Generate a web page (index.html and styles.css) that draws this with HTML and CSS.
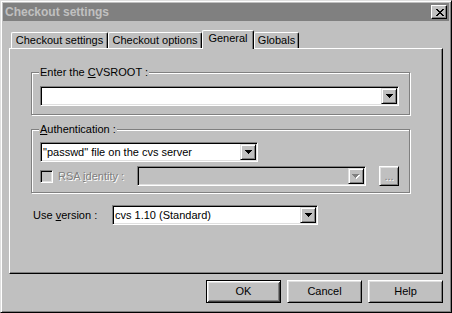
FILE: index.html
```html
<!DOCTYPE html>
<html>
<head>
<meta charset="utf-8">
<link rel="stylesheet" href="styles.css">
</head>
<body>
<div class="window">
  <div class="titlebar">
    <span class="title">Checkout settings</span>
    <span class="close"><svg width="8" height="7" viewBox="0 0 8 7" shape-rendering="crispEdges"><path fill="#000" d="M0 0h2v1H0z M6 0h2v1H6z M1 1h2v1H1z M5 1h2v1H5z M2 2h4v1H2z M3 3h2v1H3z M2 4h4v1H2z M1 5h2v1H1z M5 5h2v1H5z M0 6h2v1H0z M6 6h2v1H6z"/></svg></span>
  </div>
  <div class="body">
    <div class="tabs">
      <div class="tab t1">Checkout settings</div>
      <div class="tab t2">Checkout options</div>
      <div class="tab t3 active">General</div>
      <div class="tab t4">Globals</div>
    </div>
    <div class="panel">
      <div class="group g1">
        <div class="group-label">Enter the <u>C</u>VSROOT :</div>
        <div class="combo c-root">
          <span class="combo-text"></span>
          <span class="drop"><svg width="7" height="4" viewBox="0 0 7 4" shape-rendering="crispEdges"><path fill="#000" d="M0 0h7v1H0z M1 1h5v1H1z M2 2h3v1H2z M3 3h1v1H3z"/></svg></span>
        </div>
      </div>
      <div class="group g2">
        <div class="group-label"><u>A</u>uthentication :</div>
        <div class="combo c-auth">
          <span class="combo-text">"passwd" file on the cvs server</span>
          <span class="drop"><svg width="7" height="4" viewBox="0 0 7 4" shape-rendering="crispEdges"><path fill="#000" d="M0 0h7v1H0z M1 1h5v1H1z M2 2h3v1H2z M3 3h1v1H3z"/></svg></span>
        </div>
        <div class="rsa-row">
          <span class="check"></span>
          <span class="rsa-label">RSA <u>i</u>dentity :</span>
          <div class="combo combo-disabled c-rsa">
            <span class="combo-text"></span>
            <span class="drop"><svg width="8" height="5" viewBox="0 0 8 5" shape-rendering="crispEdges"><path fill="#fff" d="M1 1h7v1H1z M2 2h5v1H2z M3 3h3v1H3z M4 4h1v1H4z"/><path fill="#808080" d="M0 0h7v1H0z M1 1h5v1H1z M2 2h3v1H2z M3 3h1v1H3z"/></svg></span>
          </div>
          <span class="btn dots">...</span>
        </div>
      </div>
      <div class="version-row">
        <span class="version-label">Use <u>v</u>ersion :</span>
        <div class="combo c-ver">
          <span class="combo-text">cvs 1.10 (Standard)</span>
          <span class="drop"><svg width="7" height="4" viewBox="0 0 7 4" shape-rendering="crispEdges"><path fill="#000" d="M0 0h7v1H0z M1 1h5v1H1z M2 2h3v1H2z M3 3h1v1H3z"/></svg></span>
        </div>
      </div>
    </div>
    <div class="buttons">
      <span class="btn push default">OK</span>
      <span class="btn push">Cancel</span>
      <span class="btn push">Help</span>
    </div>
  </div>
</div>
</body>
</html>
```

FILE: styles.css
```css
* { box-sizing: border-box; }
html, body { margin: 0; padding: 0; background: #c0c0c0; }
body {
  font-family: "Liberation Sans", Arial, sans-serif;
  font-size: 11px;
  line-height: 13px;
  color: #000;
}
u { text-decoration: underline; text-underline-offset: 1px; }

.window {
  width: 452px;
  height: 313px;
  border: 1px solid;
  border-color: #dfdfdf #000 #000 #dfdfdf;
  box-shadow: inset 1px 1px #fff, inset -1px -1px #808080;
  padding: 2px;
  background: #c0c0c0;
}

.titlebar {
  height: 18px;
  background: #808080;
  display: flex;
  align-items: center;
  justify-content: space-between;
  padding: 0 2px;
}
.title {
  font-weight: bold;
  font-size: 12px;
  line-height: 14px;
  color: #c0c0c0;
}
.close {
  width: 16px;
  height: 14px;
  display: flex;
  align-items: center;
  justify-content: center;
  background: #c0c0c0;
  border: 1px solid;
  border-color: #fff #000 #000 #fff;
  box-shadow: inset -1px -1px #808080;
  padding-left: 1px;
}
.close svg { display: block; }

.body { padding: 9px 6px 0 6px; }

.tabs {
  display: flex;
  align-items: flex-end;
  height: 18px;
  padding-left: 2px;
}
.tab {
  height: 16px;
  padding-top: 1px;
  border-left: 1px solid #fff;
  border-top: 1px solid #fff;
  border-right: 1px solid #000;
  box-shadow: inset -1px 0 #808080;
  border-radius: 2px 2px 0 0;
  text-align: center;
  white-space: nowrap;
  background: #c0c0c0;
}
.t1 { width: 97px; }
.t2 { width: 94px; }
.t3 { width: 52px; }
.t4 { width: 45px; }
.tab.active {
  height: 19px;
  margin-bottom: -1px;
  position: relative;
  z-index: 1;
}

.panel {
  height: 226px;
  border: 1px solid;
  border-color: #fff #000 #000 #fff;
  box-shadow: inset -1px -1px #808080;
}

.group {
  margin-left: 21px;
  width: 379px;
  border: 1px solid #808080;
  box-shadow: inset 1px 1px #fff, 1px 1px #fff;
  padding: 0 8px 8px 8px;
}
.g1 { margin-top: 23px; }
.g2 { margin-top: 14px; padding-bottom: 6px; }
.group-label {
  width: fit-content;
  margin: -7px 0 0 -1px;
  padding: 0 1px;
  background: #c0c0c0;
  white-space: nowrap;
}

.combo {
  display: flex;
  height: 20px;
  background: #fff;
  border: 1px solid;
  border-color: #808080 #fff #fff #808080;
  box-shadow: inset 1px 1px #000, inset -1px -1px #dfdfdf;
  padding: 1px;
}
.combo-text {
  flex: 1;
  padding-left: 1px;
  line-height: 16px;
  white-space: nowrap;
  overflow: hidden;
}
.drop {
  width: 16px;
  height: 16px;
  display: flex;
  align-items: center;
  justify-content: center;
  background: #c0c0c0;
  border: 1px solid;
  border-color: #dfdfdf #000 #000 #dfdfdf;
  box-shadow: inset 1px 1px #fff, inset -1px -1px #808080;
}
.drop svg { display: block; }
.combo-disabled { background: #c0c0c0; }

.g1 .combo { margin-top: 7px; width: 359px; }
.c-auth { margin-top: 6px; width: 218px; }

.rsa-row {
  display: flex;
  align-items: center;
  margin-top: 4px;
}
.check {
  width: 13px;
  height: 13px;
  border: 1px solid;
  border-color: #808080 #fff #fff #808080;
  box-shadow: inset 1px 1px #000, inset -1px -1px #dfdfdf;
  background: #c0c0c0;
  margin-right: 5px;
}
.rsa-label {
  width: 79px;
  color: #808080;
  text-shadow: 1px 1px #fff;
  white-space: nowrap;
}
.c-rsa { width: 229px; }

.btn {
  display: flex;
  align-items: center;
  justify-content: center;
  background: #c0c0c0;
  border: 1px solid;
  border-color: #fff #000 #000 #fff;
  box-shadow: inset 1px 1px #dfdfdf, inset -1px -1px #808080;
}
.dots {
  width: 20px;
  height: 20px;
  margin-left: 13px;
  color: #808080;
  text-shadow: 1px 1px #fff;
  letter-spacing: 0;
}

.version-row {
  display: flex;
  align-items: center;
  margin-top: 12px;
}
.version-label {
  margin-left: 23px;
  width: 79px;
  white-space: nowrap;
}
.c-ver { width: 206px; }

.buttons {
  display: flex;
  justify-content: flex-end;
  gap: 6px;
  margin-top: 6px;
}
.push { width: 75px; height: 23px; }
.push.default {
  border-color: #000;
  box-shadow: inset 1px 1px #fff, inset -1px -1px #404040, inset 2px 2px #dfdfdf, inset -2px -2px #808080;
}
```
